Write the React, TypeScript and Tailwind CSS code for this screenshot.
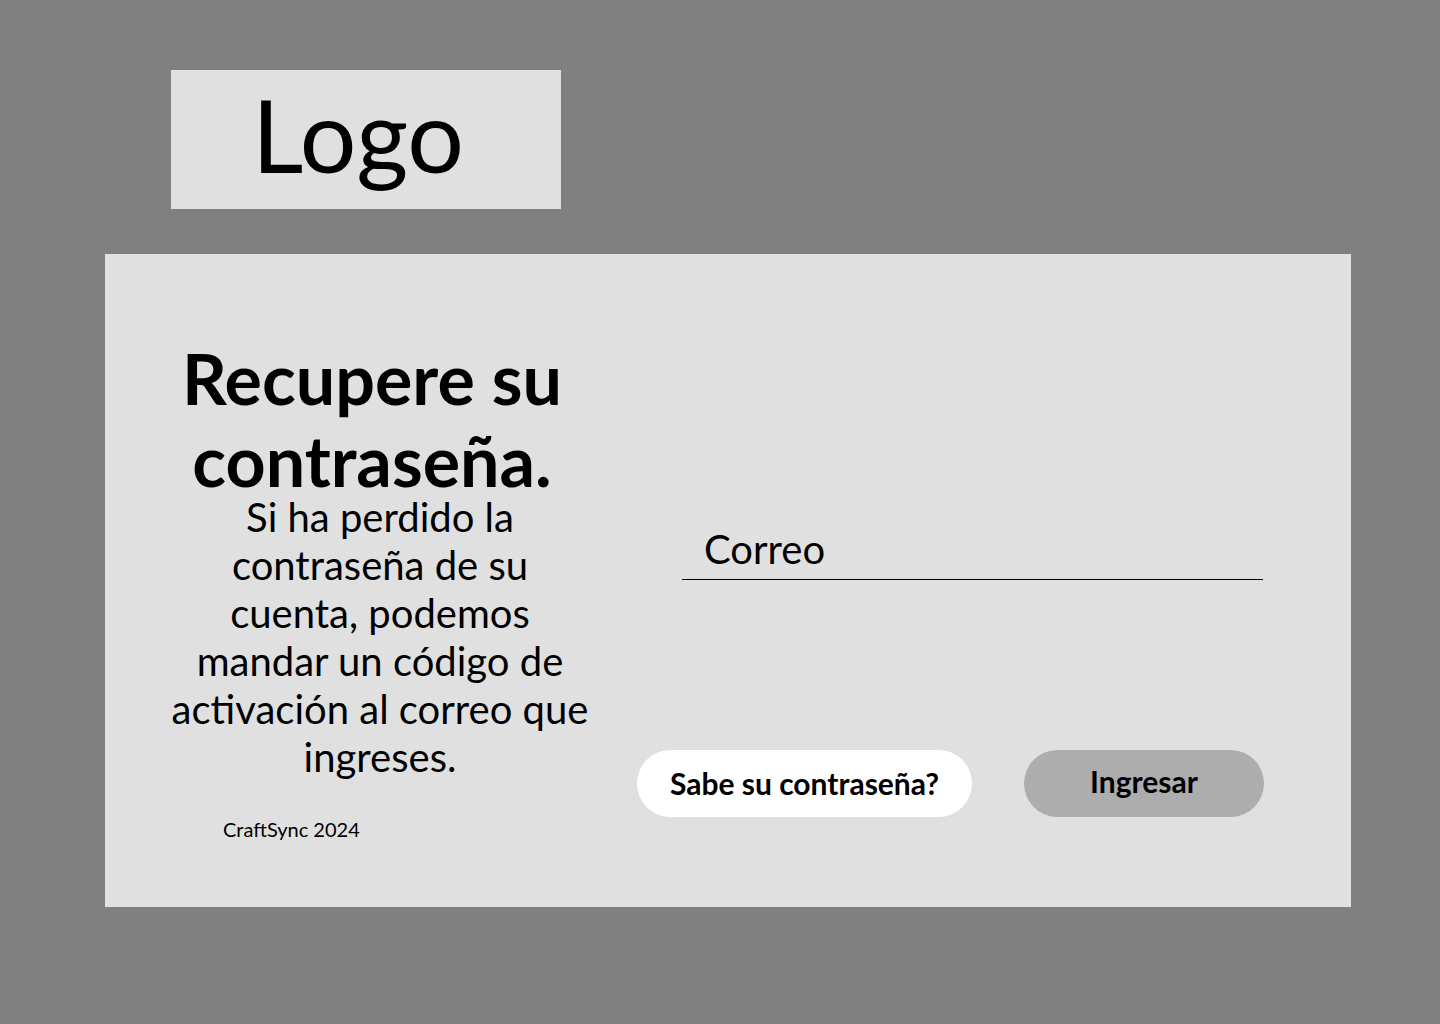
export default function App() {
  return (
    <div
      className="min-h-screen w-full bg-[#808080] pt-[70px]"
      style={{ fontFamily: 'Lato, "Noto Sans", sans-serif' }}
    >
      {/* Logo */}
      <div className="ml-[171px] flex h-[139px] w-[390px] items-center bg-[#e0e0e0] pb-[12px] pl-[81px]">
        <span className="text-[100px] leading-[120px] text-black">Logo</span>
      </div>

      {/* Card */}
      <div className="ml-[105px] mt-[45px] flex h-[653px] w-[1246px] bg-[#e0e0e0]">
        <div className="ml-[63px] flex w-[424px] flex-col pt-[83px] text-black">
          <h1 className="pr-[16px] text-center text-[70px] font-bold leading-[82px]">
            Recupere su
            <br />
            contraseña.
          </h1>
          <p className="-mt-[8px] text-center text-[40px] leading-[48px]">
            Si ha perdido la
            <br />
            contraseña de su
            <br />
            cuenta, podemos
            <br />
            mandar un código de
            <br />
            activación al correo que
            <br />
            ingreses.
          </p>
          <span className="mt-[36px] pl-[55px] text-[20px] leading-[24px]">CraftSync 2024</span>
        </div>

        <div className="ml-[45px] flex w-[627px] flex-col pt-[272px]">
          <div className="ml-[45px] w-[581px] border-b border-black pb-[6px] pl-[22px]">
            <span className="block text-[40px] leading-[47px] text-black">Correo</span>
          </div>
          <div className="mt-[170px] flex items-center justify-between">
            <button className="flex h-[67px] w-[335px] items-center justify-center rounded-full bg-white text-[30px] font-bold text-black">
              Sabe su contraseña?
            </button>
            <button className="flex h-[67px] w-[240px] items-center justify-center rounded-full bg-[#adadad] pb-[4px] text-[30px] font-bold text-black">
              Ingresar
            </button>
          </div>
        </div>
      </div>
    </div>
  );
}
